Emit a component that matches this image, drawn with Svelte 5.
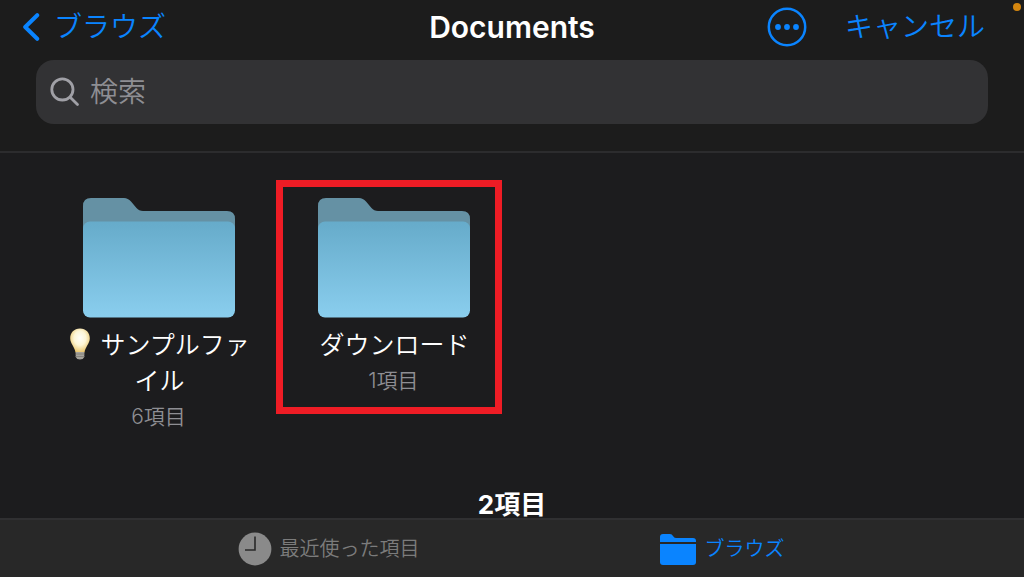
<script lang="ts">
	type Folder = { name: string; count: number; bulb?: boolean; highlighted?: boolean };

	const folders: Folder[] = [
		{ name: 'サンプルファイル', count: 6, bulb: true },
		{ name: 'ダウンロード', count: 1, highlighted: true }
	];

	let query = $state('');
	let tab = $state<'recents' | 'browse'>('browse');
</script>

<svelte:head>
	<title>Documents</title>
</svelte:head>

<div class="screen">
	<header class="top">
		<span class="status-dot"></span>

		<div class="nav">
			<button class="link back">
				<svg width="18" height="28" viewBox="0 0 18 28" aria-hidden="true">
					<path d="M15.2 2.2 3.2 14l12 11.8" />
				</svg>
				ブラウズ
			</button>
			<h1>Documents</h1>
			<div class="actions">
				<button class="link more" aria-label="その他">
					<svg width="40" height="40" viewBox="0 0 40 40" aria-hidden="true">
						<circle class="ring" cx="20" cy="20" r="18.2" />
						<circle cx="11" cy="20" r="2.9" />
						<circle cx="20" cy="20" r="2.9" />
						<circle cx="29" cy="20" r="2.9" />
					</svg>
				</button>
				<button class="link">キャンセル</button>
			</div>
		</div>

		<label class="search">
			<svg width="30" height="30" viewBox="0 0 30 30" aria-hidden="true">
				<circle cx="12.4" cy="12.4" r="10.6" />
				<path d="m20.2 20.2 7.3 7.3" />
			</svg>
			<input type="text" placeholder="検索" aria-label="検索" bind:value={query} />
		</label>
	</header>

	<main>
		<div class="grid">
			{#each folders as folder}
				<button class="folder" class:highlighted={folder.highlighted}>
					<svg class="folder-icon" width="152" height="120" viewBox="0 0 152 120" aria-hidden="true">
						<defs>
							<linearGradient id="front" x1="0" y1="0" x2="0" y2="1">
								<stop offset="0" stop-color="#66abca" />
								<stop offset="1" stop-color="#8aceee" />
							</linearGradient>
						</defs>
						<path
							d="M0 8Q0 0 8 0H41Q45 0 48 3.5L53.5 10Q56 13 60 13H144Q152 13 152 21V50H0Z"
							fill="#6591a4"
						/>
						<rect y="23.5" width="152" height="96" rx="7" fill="url(#front)" />
					</svg>
					<span class="name">
						{#if folder.bulb}
							<svg class="bulb" width="22" height="32" viewBox="0 0 22 32" aria-hidden="true">
								<defs>
									<radialGradient id="glass" cx="0.5" cy="0.4" r="0.6">
										<stop offset="0" stop-color="#fffef8" />
										<stop offset="0.5" stop-color="#fdf6d6" />
										<stop offset="1" stop-color="#e9c46a" />
									</radialGradient>
								</defs>
								<path
									d="M11 0.5C5 0.5 1.2 4.8 1.2 10.2c0 5.3 4.3 8 5.3 14.3h9c1-6.3 5.3-9 5.3-14.3C20.8 4.8 17 0.5 11 0.5Z"
									fill="url(#glass)"
								/>
								<path d="M6.7 24h8.6v5q-1 2.500-4.300 2.500T6.700 29Z" fill="#a5a29b" />
								<path d="M6.7 26h8.6M6.7 28.5h8.6" stroke="#85827b" />
							</svg>
						{/if}
						{folder.name}
					</span>
					<span class="count">{folder.count}項目</span>
				</button>
			{/each}
		</div>
		<p class="total">{folders.length}項目</p>
	</main>

	<nav class="tabs">
		<button class:active={tab === 'recents'} onclick={() => (tab = 'recents')}>
			<svg width="34" height="34" viewBox="0 0 34 34" aria-hidden="true">
				<circle cx="17" cy="17" r="16.4" />
				<path class="hands" d="M17 4.500V18H7" />
			</svg>
			最近使った項目
		</button>
		<button class:active={tab === 'browse'} onclick={() => (tab = 'browse')}>
			<svg width="38" height="34" viewBox="0 0 38 34" aria-hidden="true">
				<path d="M1 9V5Q1 2 4 2H11Q13 2 14 4T17 6H34Q37 6 37 9V10H1Z" />
				<path d="M1 12H37V30Q37 33 34 33H4Q1 33 1 30Z" />
			</svg>
			ブラウズ
		</button>
	</nav>
</div>

<style>
	:global(body) {
		margin: 0;
		background: #1c1c1e;
	}

	.screen {
		display: flex;
		flex-direction: column;
		height: 100vh;
		background: #1c1c1e;
		color: #fff;
		font-family: Inter, 'Noto Sans CJK JP', sans-serif;
		font-weight: 350;
	}

	button {
		margin: 0;
		padding: 0;
		border: none;
		background: none;
		color: inherit;
		font: inherit;
		cursor: pointer;
	}

	/* ── Header ── */

	.top {
		position: relative;
		padding: 0 36px 27px;
		border-bottom: 2px solid #2c2c2e;
		background: #1c1c1c;
	}

	.status-dot {
		position: absolute;
		top: 3px;
		right: 3px;
		width: 8px;
		height: 8px;
		border-radius: 50%;
		background: #d4860f;
	}

	.nav {
		display: grid;
		grid-template-columns: 1fr auto 1fr;
		align-items: center;
		height: 54px;
		margin: 0 -14px 6px;
	}

	.nav h1 {
		margin: 0;
		font-size: 30px;
		line-height: 36px;
		font-weight: 600;
	}

	.link {
		color: #0a84ff;
		font-size: 28px;
		line-height: 36px;
	}

	.back {
		display: flex;
		align-items: center;
		justify-self: start;
		gap: 14px;
	}

	.back svg {
		fill: none;
		stroke: #0a84ff;
		stroke-width: 4;
		stroke-linecap: round;
		stroke-linejoin: round;
	}

	.actions {
		display: flex;
		align-items: center;
		justify-content: flex-end;
		gap: 38px;
		padding-right: 17px;
	}

	.more svg {
		display: block;
		fill: #0a84ff;
	}

	.more .ring {
		fill: none;
		stroke: #0a84ff;
		stroke-width: 2.5;
	}

	.search {
		display: flex;
		align-items: center;
		gap: 10px;
		height: 64px;
		padding: 0 14px;
		border-radius: 18px;
		background: #323234;
	}

	.search svg {
		fill: none;
		stroke: #a0a0a6;
		stroke-width: 2.8;
		stroke-linecap: round;
	}

	.search input {
		flex: 1;
		min-width: 0;
		padding: 0;
		border: none;
		outline: none;
		background: none;
		color: #fff;
		font: inherit;
		font-size: 28px;
		line-height: 36px;
	}

	.search input::placeholder {
		color: #8e8e93;
		opacity: 1;
	}

	/* ── Folders ── */

	main {
		display: flex;
		flex: 1;
		flex-direction: column;
		min-height: 0;
	}

	.grid {
		display: grid;
		grid-template-columns: repeat(auto-fill, 235px);
		padding: 27px 41px 0;
	}

	.folder {
		position: relative;
		display: flex;
		flex-direction: column;
		align-items: center;
		padding: 18px 24px 14px;
	}

	/* red frame drawn over the tile */
	.folder.highlighted::after {
		content: '';
		position: absolute;
		inset: 0 9px auto 0;
		box-sizing: border-box;
		height: 234px;
		border: 7px solid #ee1c25;
	}

	.name {
		margin-top: 9px;
		padding-left: 2px;
		font-size: 25px;
		line-height: 36px;
		word-break: break-all;
	}

	.bulb {
		margin-right: 2px;
		vertical-align: -6px;
	}

	.count {
		color: #8e8e93;
		font-size: 21px;
		line-height: 36px;
	}

	.total {
		margin: auto 0 0;
		font-size: 26px;
		line-height: 26px;
		font-weight: 700;
		text-align: center;
	}

	/* ── Tab bar ── */

	.tabs {
		display: grid;
		grid-template-columns: 1fr 1fr;
		height: 57px;
		padding: 0 106px 0 132px;
		border-top: 2px solid #303032;
		background: #282828;
	}

	.tabs button {
		display: flex;
		align-items: center;
		justify-content: center;
		gap: 8px;
		color: #7c7c7c;
		font-size: 20px;
		line-height: 28px;
	}

	.tabs svg {
		fill: #8a8a8a;
	}

	.tabs .hands {
		fill: none;
		stroke: #282828;
		stroke-width: 1.6;
	}

	.tabs .active {
		color: #0a84ff;
	}

	.tabs .active svg {
		fill: #0a84ff;
	}
</style>
